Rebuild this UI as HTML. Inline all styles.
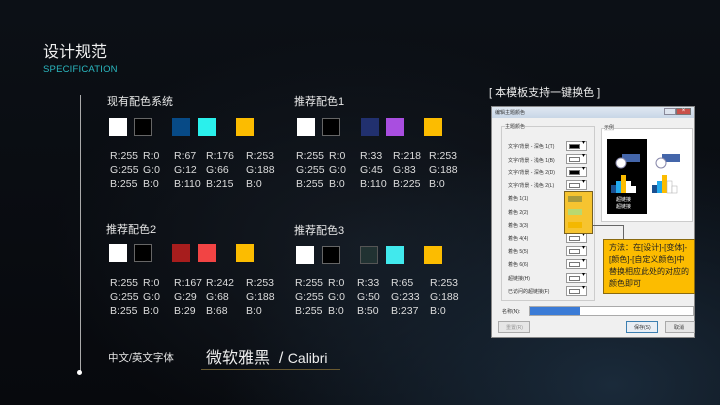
<!DOCTYPE html>
<html><head><meta charset="utf-8"><style>
*{margin:0;padding:0;box-sizing:border-box}
body{width:720px;height:405px;overflow:hidden;background:#0a0d12;font-family:"Liberation Sans","Noto Sans CJK SC",sans-serif;color:#e8e8e8;position:relative}
.bg{position:absolute;inset:0;background:radial-gradient(ellipse at 85% 95%,#1a2a3a 0%,rgba(10,13,18,0) 45%),radial-gradient(ellipse at 50% 60%,#141a22 0%,rgba(10,13,18,0) 60%),linear-gradient(180deg,#0c1016,#07090d)}
.a{position:absolute;white-space:nowrap}
.sw{position:absolute;width:18px;height:18px}
.k{border:1px solid #666;background:#000}
.t{font-size:10.5px;line-height:14px;color:#ddd}
.dl{font-size:5px;color:#333}
.btn{position:absolute;width:21px;height:10px;background:#fff;border:1px solid #999}
.btn i{position:absolute;left:2px;top:2px;width:11px;height:5px;border:1px solid #777}
.btn:after{content:"▾";position:absolute;right:1px;top:-3px;font-size:6px;color:#000}
</style></head><body><div class="bg"></div>
<div class="a" style="left:43px;top:38px;font-size:16px;color:#f0f0f0">设计规范</div>
<div class="a" style="left:43px;top:64px;font-size:9.5px;color:#2ab8c0;letter-spacing:.2px">SPECIFICATION</div>
<div class="a" style="left:79.5px;top:95px;width:1px;height:277px;background:#aaa"></div>
<div class="a" style="left:77px;top:370px;width:5px;height:5px;border-radius:50%;background:#fff"></div>

<div class="a" style="left:107px;top:93px;font-size:11px">现有配色系统</div>
<div class="sw" style="left:109px;top:118px;background:#fff"></div>
<div class="sw k" style="left:134px;top:118px"></div>
<div class="sw" style="left:172px;top:118px;background:#074a86"></div>
<div class="sw" style="left:198px;top:118px;background:#2af0ec"></div>
<div class="sw" style="left:236px;top:118px;background:#fcbc00"></div>
<div class="a t" style="left:110px;top:149px">R:255<br>G:255<br>B:255</div>
<div class="a t" style="left:143px;top:149px">R:0<br>G:0<br>B:0</div>
<div class="a t" style="left:174px;top:149px">R:67<br>G:12<br>B:110</div>
<div class="a t" style="left:206px;top:149px">R:176<br>G:66<br>B:215</div>
<div class="a t" style="left:246px;top:149px">R:253<br>G:188<br>B:0</div>

<div class="a" style="left:294px;top:93px;font-size:11px">推荐配色1</div>
<div class="sw" style="left:297px;top:118px;background:#fff"></div>
<div class="sw k" style="left:322px;top:118px"></div>
<div class="sw" style="left:361px;top:118px;background:#21306e"></div>
<div class="sw" style="left:386px;top:118px;background:#a94ee0"></div>
<div class="sw" style="left:424px;top:118px;background:#fcbc00"></div>
<div class="a t" style="left:296px;top:149px">R:255<br>G:255<br>B:255</div>
<div class="a t" style="left:329px;top:149px">R:0<br>G:0<br>B:0</div>
<div class="a t" style="left:360px;top:149px">R:33<br>G:45<br>B:110</div>
<div class="a t" style="left:393px;top:149px">R:218<br>G:83<br>B:225</div>
<div class="a t" style="left:429px;top:149px">R:253<br>G:188<br>B:0</div>

<div class="a" style="left:106px;top:221px;font-size:11px">推荐配色2</div>
<div class="sw" style="left:109px;top:244px;background:#fff"></div>
<div class="sw k" style="left:134px;top:244px"></div>
<div class="sw" style="left:172px;top:244px;background:#a71d1d"></div>
<div class="sw" style="left:198px;top:244px;background:#f24444"></div>
<div class="sw" style="left:236px;top:244px;background:#fcbc00"></div>
<div class="a t" style="left:110px;top:276px">R:255<br>G:255<br>B:255</div>
<div class="a t" style="left:143px;top:276px">R:0<br>G:0<br>B:0</div>
<div class="a t" style="left:174px;top:276px">R:167<br>G:29<br>B:29</div>
<div class="a t" style="left:206px;top:276px">R:242<br>G:68<br>B:68</div>
<div class="a t" style="left:246px;top:276px">R:253<br>G:188<br>B:0</div>

<div class="a" style="left:294px;top:222px;font-size:11px">推荐配色3</div>
<div class="sw" style="left:296px;top:246px;background:#fff"></div>
<div class="sw k" style="left:322px;top:246px"></div>
<div class="sw" style="left:360px;top:246px;background:#213232;border:1px solid #555"></div>
<div class="sw" style="left:386px;top:246px;background:#41e9ed"></div>
<div class="sw" style="left:424px;top:246px;background:#fcbc00"></div>
<div class="a t" style="left:295px;top:276px">R:255<br>G:255<br>B:255</div>
<div class="a t" style="left:328px;top:276px">R:0<br>G:0<br>B:0</div>
<div class="a t" style="left:357px;top:276px">R:33<br>G:50<br>B:50</div>
<div class="a t" style="left:391px;top:276px">R:65<br>G:233<br>B:237</div>
<div class="a t" style="left:430px;top:276px">R:253<br>G:188<br>B:0</div>

<div class="a" style="left:108px;top:350px;font-size:10.5px">中文/英文字体</div>
<div class="a" style="left:206px;top:344px;font-size:16px;color:#eee">微软雅黑 &nbsp;/ <span style="font-size:14px">Calibri</span></div>
<div class="a" style="left:201px;top:369px;width:139px;height:1px;background:#6a5a30"></div>

<div class="a" style="left:489px;top:84px;font-size:11px;color:#eee">[ 本模板支持一键换色 ]</div>
<div class="a" style="left:491px;top:106px;width:204px;height:232px;background:#f0f0f0;border:1px solid #888">
 <div class="a" style="left:0;top:0;width:202px;height:11px;background:linear-gradient(#dfe8f2,#c8d6e6)"></div>
 <div class="a dl" style="left:3px;top:2px">编辑主题颜色</div>
 <div class="a" style="left:172px;top:1px;width:12px;height:7px;background:#dde4ee;border:1px solid #889"></div>
 <div class="a" style="left:184px;top:1px;width:15px;height:7px;background:#c9504a;border:1px solid #777;font-size:6px;color:#fff;text-align:center;line-height:5px">×</div>
 <div class="a" style="left:9px;top:19px;width:94px;height:175px;border:1px solid #ccc"></div>
 <div class="a dl" style="left:13px;top:16px;background:#f0f0f0">主题颜色</div>
 <div class="a" style="left:109px;top:21px;width:92px;height:94px;border:1px solid #ccc;background:#fff"></div>
 <div class="a dl" style="left:112px;top:17px;background:#f0f0f0">示例</div>
 <div class="a" style="left:115px;top:32px;width:40px;height:75px;background:#000"></div>
 <svg class="a" style="left:115px;top:32px" width="80" height="75">
  <rect x="15" y="15" width="18" height="8" fill="#4466aa"/><circle cx="14" cy="24" r="5" fill="#fff" stroke="#88a"/>
  <rect x="4" y="46" width="5" height="8" fill="#1a4f90"/><rect x="9" y="42" width="5" height="12" fill="#2ae"/><rect x="14" y="36" width="5" height="18" fill="#fcbc00"/><rect x="19" y="42" width="5" height="12" fill="#fff"/><rect x="24" y="47" width="5" height="7" fill="#fff"/>
  <rect x="55" y="15" width="18" height="8" fill="#4466aa"/><circle cx="54" cy="24" r="5" fill="#fff" stroke="#88a"/>
  <rect x="45" y="46" width="5" height="8" fill="#1a4f90"/><rect x="50" y="42" width="5" height="12" fill="#2ae"/><rect x="55" y="36" width="5" height="18" fill="#fcbc00"/><rect x="60" y="42" width="5" height="12" fill="#fff" stroke="#aaa" stroke-width=".5"/><rect x="65" y="47" width="5" height="7" fill="#fff" stroke="#aaa" stroke-width=".5"/>
 </svg>
 <div class="a dl" style="left:124px;top:89px;color:#fff">超链接</div><div class="a dl" style="left:124px;top:96px;color:#fff">超链接</div>
 <div class="a dl" style="left:16px;top:36px">文字/背景 - 深色 1(T)</div><div class="btn" style="left:74px;top:34px"><i style="background:#000"></i></div>
 <div class="a dl" style="left:16px;top:50px">文字/背景 - 浅色 1(B)</div><div class="btn" style="left:74px;top:47px"><i style="background:#fff"></i></div>
 <div class="a dl" style="left:16px;top:62px">文字/背景 - 深色 2(D)</div><div class="btn" style="left:74px;top:60px"><i style="background:#000"></i></div>
 <div class="a dl" style="left:16px;top:75px">文字/背景 - 浅色 2(L)</div><div class="btn" style="left:74px;top:73px"><i style="background:#fff"></i></div>
 <div class="a dl" style="left:16px;top:88px">着色 1(1)</div>
 <div class="a dl" style="left:16px;top:102px">着色 2(2)</div>
 <div class="a dl" style="left:16px;top:115px">着色 3(3)</div>
 <div class="a dl" style="left:16px;top:128px">着色 4(4)</div><div class="btn" style="left:74px;top:126px"><i style="background:#fff"></i></div>
 <div class="a dl" style="left:16px;top:141px">着色 5(5)</div><div class="btn" style="left:74px;top:139px"><i style="background:#fff"></i></div>
 <div class="a dl" style="left:16px;top:154px">着色 6(6)</div><div class="btn" style="left:74px;top:152px"><i style="background:#fff"></i></div>
 <div class="a dl" style="left:16px;top:168px">超链接(H)</div><div class="btn" style="left:74px;top:166px"><i style="background:#fff"></i></div>
 <div class="a dl" style="left:16px;top:181px">已访问的超链接(F)</div><div class="btn" style="left:74px;top:179px"><i style="background:#fff"></i></div>
 <div class="a" style="left:72px;top:84px;width:29px;height:43px;background:#f6c430;border:1px solid #776020"></div>
 <div class="a" style="left:76px;top:89px;width:14px;height:6px;background:#a89a3c"></div>
 <div class="a" style="left:76px;top:102px;width:14px;height:6px;background:#b8d870"></div>
 <div class="a" style="left:76px;top:115px;width:14px;height:6px;background:#f4b800"></div>
 <div class="a" style="left:101px;top:118px;width:31px;height:1px;background:#666"></div>
 <div class="a" style="left:131px;top:118px;width:1px;height:14px;background:#666"></div>
 <div class="a" style="left:111px;top:132px;width:92px;height:55px;background:#fcbc00;border:1px solid #8a6a10;font-size:8px;line-height:12px;color:#222;padding:2px 5px;white-space:nowrap">方法：在[设计]-[变体]-<br>[颜色]-[自定义颜色]中<br>替换相应此处的对应的<br>颜色即可</div>
 <div class="a dl" style="left:10px;top:201px">名称(N):</div>
 <div class="a" style="left:37px;top:199px;width:165px;height:10px;background:#fff;border:1px solid #aaa"><div style="width:50px;height:8px;background:#3b7bd6"></div></div>
 <div class="a" style="left:6px;top:214px;width:32px;height:12px;border:1px solid #aaa;background:#e6e6e6"></div>
 <div class="a" style="left:134px;top:214px;width:32px;height:12px;border:1px solid #3c7fb1;background:#e8eef5"></div>
 <div class="a" style="left:173px;top:214px;width:30px;height:12px;border:1px solid #aaa;background:#e6e6e6"></div>
 <div class="a dl" style="left:142px;top:217px">保存(S)</div><div class="a dl" style="left:182px;top:217px">取消</div><div class="a dl" style="left:14px;top:217px;color:#999">重置(R)</div>
</div>
</body></html>
